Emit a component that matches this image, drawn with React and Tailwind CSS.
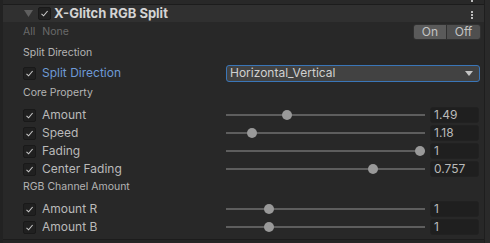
import React from 'react';

const font = { fontFamily: 'Inter, "Noto Sans", sans-serif' };

function Check() {
  return (
    <span className="flex h-[13px] w-[13px] items-center justify-center rounded-[2px] border border-[#191919] bg-[#202020]">
      <svg width="9" height="9" viewBox="0 0 9 9">
        <path d="M1.5 4.8 L3.6 6.8 L7.6 2" fill="none" stroke="#c8c8c8" strokeWidth="1.1" />
      </svg>
    </span>
  );
}

function SliderRow({ label, value, pos }) {
  return (
    <div className="flex h-[18px] items-center">
      <div className="flex w-[223px] items-center pl-[20px]">
        <Check />
        <span className="ml-[6px] text-[12px] text-[#bababa]">{label}</span>
      </div>
      <div className="relative flex h-full w-[199px] items-center">
        <div className="h-[2px] w-full bg-[#5e5e5e]" />
        <div
          className="absolute h-[10px] w-[10px] rounded-full bg-[#999999]"
          style={{ left: `${pos}px` }}
        />
      </div>
      <div className="ml-[5px] flex h-[16px] w-[49px] items-center rounded-[3px] border border-[#212121] bg-[#1f1f1f] pl-[3px] text-[12px] text-[#bababa]">
        {value}
      </div>
    </div>
  );
}

function Section({ children, h }) {
  return (
    <div className={`flex items-center pl-[20px] text-[10.5px] text-[#b4b4b4] ${h}`}>{children}</div>
  );
}

export default function App() {
  return (
    <div className="relative h-[243px] w-[490px] overflow-hidden bg-[#282828]" style={font}>
      <div className="flex h-full">
        <div className="w-[3px] bg-[#222222]" />
        <div className="flex w-[481px] flex-col">
          {/* previous component tail */}
          <div className="relative h-[5px] border-b border-[#1c1c1c] bg-[#282828]">
            <span className="absolute left-[468px] top-0 h-[2px] w-[2px] bg-[#bbbbbb]" />
          </div>
          {/* header */}
          <div className="relative flex h-[17px] items-center bg-[#303030]">
            <svg className="ml-[21px]" width="9" height="7" viewBox="0 0 9 7">
              <path d="M0 0 H9 L4.5 7 Z" fill="#5f5f5f" />
            </svg>
            <span className="ml-[5px]">
              <Check />
            </span>
            <span className="ml-[3px] text-[13px] font-bold text-[#d4d4d4]">X-Glitch RGB Split</span>
            <div className="absolute left-[468px] top-[6px] flex flex-col gap-[1px]">
              <span className="h-[2px] w-[2px] bg-[#bbbbbb]" />
              <span className="h-[2px] w-[2px] bg-[#bbbbbb]" />
              <span className="h-[2px] w-[2px] bg-[#bbbbbb]" />
            </div>
          </div>
          {/* All / None + On / Off */}
          <div className="flex h-[20px] items-start">
            <div className="mt-[2px] flex gap-[7px] pl-[20px] text-[10.5px] text-[#6a6a6a]">
              <span>All</span>
              <span>None</span>
            </div>
            <div className="ml-auto mr-[3px] mt-[2px] flex h-[16px] overflow-hidden rounded-[3px] border border-[#303030] text-[12px] text-[#c4c4c4]">
              <span className="flex w-[33px] items-center justify-center border-r border-[#303030] bg-[#5a5a5a]">On</span>
              <span className="flex w-[33px] items-center justify-center bg-[#4f4f4f]">Off</span>
            </div>
          </div>
          <Section h="h-[21px]">Split Direction</Section>
          <div className="flex h-[20px] items-center">
            <div className="flex w-[223px] items-center pl-[20px]">
              <Check />
              <span className="ml-[6px] text-[12px] text-[#6e9ad6]">Split Direction</span>
            </div>
            <div className="flex h-[17px] w-[254px] items-center justify-between rounded-[3px] border border-[#3a76b8] bg-[#424242] pl-[3px] pr-[6px] text-[12px] text-[#d0d0d0]">
              <span>Horizontal_Vertical</span>
              <svg width="8" height="5" viewBox="0 0 8 5">
                <path d="M0 0 H8 L4 5 Z" fill="#c4c4c4" />
              </svg>
            </div>
          </div>
          <Section h="h-[19px]">Core Property</Section>
          <div className="h-[4px]" />
          <SliderRow label="Amount" value="1.49" pos={56} />
          <SliderRow label="Speed" value="1.18" pos={21} />
          <SliderRow label="Fading" value="1" pos={189} />
          <SliderRow label="Center Fading" value="0.757" pos={142} />
          <Section h="h-[18px]">RGB Channel Amount</Section>
          <div className="h-[4px]" />
          <SliderRow label="Amount R" value="1" pos={38} />
          <SliderRow label="Amount B" value="1" pos={38} />
          <div className="mt-[3px] flex-1 border-t border-[#1c1c1c] bg-[#252525]" />
        </div>
        <div className="w-[1px] bg-[#1e1e1e]" />
        <div className="flex-1 bg-[#2a2a2a]" />
      </div>
    </div>
  );
}
